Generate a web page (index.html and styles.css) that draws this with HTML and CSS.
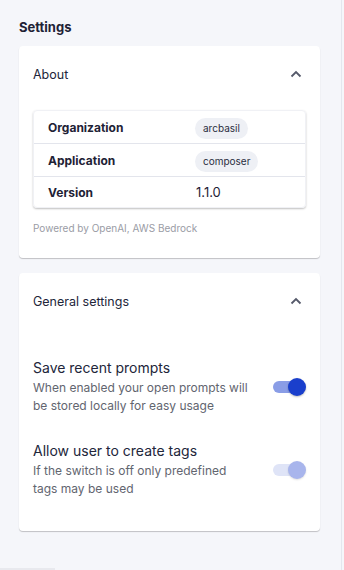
FILE: index.html
```html
<!DOCTYPE html>
<html>
<head>
<meta charset="utf-8">
<link rel="stylesheet" href="styles.css">
</head>
<body>
<div class="panel">
  <h1 class="title">Settings</h1>
  <section class="card about">
    <div class="card-head">
      <span class="card-title">About</span>
      <svg class="chev" width="12" height="8" viewBox="0 0 12 8"><path d="M1.5 6.5 L6 2 L10.5 6.5" fill="none" stroke="#55596a" stroke-width="1.8"/></svg>
    </div>
    <div class="info">
      <div class="row"><span class="label">Organization</span><span class="val"><span class="chip">arcbasil</span></span></div>
      <div class="row"><span class="label">Application</span><span class="val"><span class="chip">composer</span></span></div>
      <div class="row last"><span class="label">Version</span><span class="val plain">1.1.0</span></div>
    </div>
    <p class="powered">Powered by OpenAI, AWS Bedrock</p>
  </section>
  <section class="card general">
    <div class="card-head">
      <span class="card-title">General settings</span>
      <svg class="chev" width="12" height="8" viewBox="0 0 12 8"><path d="M1.5 6.5 L6 2 L10.5 6.5" fill="none" stroke="#55596a" stroke-width="1.8"/></svg>
    </div>
    <div class="setting first">
      <div class="text">
        <div class="s-title">Save recent prompts</div>
        <div class="s-desc">When enabled your open prompts will be stored locally for easy usage</div>
      </div>
      <span class="switch on"><span class="thumb"></span></span>
    </div>
    <div class="setting">
      <div class="text">
        <div class="s-title">Allow user to create tags</div>
        <div class="s-desc">If the switch is off only predefined tags may be used</div>
      </div>
      <span class="switch disabled"><span class="thumb"></span></span>
    </div>
  </section>
</div>
<div class="bottom-bar"></div>
</body>
</html>
```
FILE: styles.css
```css
html, body {
  margin: 0;
  padding: 0;
  background: #f5f6fa;
  font-family: "Inter", "Noto Sans", sans-serif;
  color: #1e2235;
}
.panel {
  width: 342px;
  height: 570px;
  box-sizing: border-box;
  border-right: 1px solid #e4e6ee;
  padding: 19px 21px 0 19px;
}
.title {
  margin: 0 0 10px 0;
  font-size: 13px;
  font-weight: 700;
  line-height: 17px;
  color: #1e2235;
}
.card {
  background: #fff;
  border-radius: 4px;
  box-shadow: 0 1px 1px rgba(0,0,0,0.22);
  padding: 0 14px;
}
.card-head {
  display: flex;
  justify-content: space-between;
  align-items: center;
  height: 56px;
}
.card-title {
  font-size: 12.5px;
  line-height: 17px;
  color: #22263a;
}
.chev {
  margin-right: 4px;
}
.about { padding-bottom: 23px; margin-bottom: 15px; }
.info {
  margin-top: 8px;
  border-radius: 4px;
  box-shadow: 0 1px 2px rgba(0,0,0,0.25);
  border: 1px solid #f0f1f5;
}
.row {
  display: flex;
  align-items: center;
  height: 32px;
  border-bottom: 1px solid #e3e5ec;
}
.row.last { border-bottom: none; height: 30px; }
.label {
  width: 147px;
  padding-left: 14px;
  font-size: 12px;
  font-weight: 700;
  color: #1e2235;
}
.chip {
  display: inline-block;
  background: #eef0f5;
  border-radius: 11px;
  font-size: 10px;
  line-height: 20px;
  padding: 0 8px 1px;
  color: #2a2e3f;
}
.plain { font-size: 13px; padding-left: 1px; color: #1e2235; }
.powered {
  margin: 14px 0 0 0;
  font-size: 10px;
  line-height: 13px;
  color: #9a9ca5;
}
.general { padding-bottom: 33px; }
.setting {
  display: flex;
  align-items: center;
  justify-content: space-between;
}
.setting.first { margin-top: 30px; margin-bottom: 27px; }
.s-title {
  font-size: 14px;
  line-height: 18px;
  color: #22263a;
}
.s-desc {
  margin-top: 2px;
  font-size: 12px;
  line-height: 18px;
  color: #62656f;
  width: 218px;
}
.switch {
  position: relative;
  width: 28px;
  height: 12px;
  border-radius: 6px;
  margin-right: 5px;
  margin-top: 0;
}
.switch.on { background: #8a9de6; }
.switch.disabled { background: #dfe4f7; }
.thumb {
  position: absolute;
  right: -5px;
  top: -3px;
  width: 18px;
  height: 18px;
  border-radius: 50%;
}
.on .thumb { background: #1a3fcc; box-shadow: 0 1px 2px rgba(0,0,0,0.25); }
.disabled .thumb { background: #a8b5ec; box-shadow: 0 1px 2px rgba(0,0,0,0.12); }
.bottom-bar {
  position: absolute;
  left: 0;
  top: 568px;
  width: 55px;
  height: 2px;
  background: #e8e9ee;
}
```
